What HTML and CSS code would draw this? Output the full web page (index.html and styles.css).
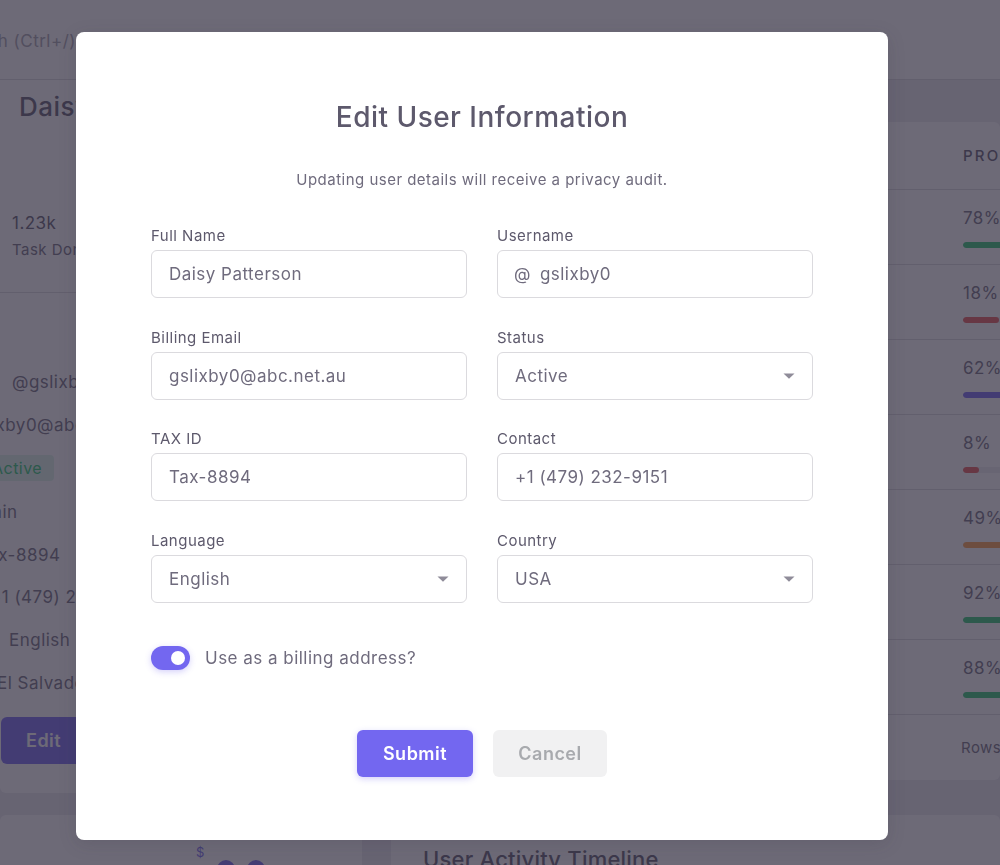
FILE: index.html
```html
<!DOCTYPE html>
<html lang="en">
<head>
<meta charset="utf-8">
<title>Edit User Information</title>
<link rel="stylesheet" href="styles.css">
</head>
<body>
<div class="page">
  <header class="navbar"><span class="search">Search (Ctrl+/)</span></header>
  <main class="content">
    <section class="card user-card">
      <h4 class="user-name">Daisy Patterson</h4>
      <div class="stat">
        <div class="stat-value">1.23k</div>
        <div class="stat-label">Task Done</div>
      </div>
      <hr class="divider">
      <ul class="details">
        <li class="d-user">@gslixby0</li>
        <li class="d-email">gslixby0@abc.net.au</li>
        <li class="d-status"><span class="badge">Active</span></li>
        <li class="d-role">Admin</li>
        <li class="d-tax">Tax-8894</li>
        <li class="d-contact">+1 (479) 232-9151</li>
        <li class="d-lang">English</li>
        <li class="d-country">El Salvador</li>
      </ul>
      <button class="btn-edit" type="button">Edit</button>
    </section>

    <section class="card table-card">
      <div class="t-head"><span class="t-cell">Progress</span></div>
      <div class="t-row"><div class="t-cell"><span class="pct">78%</span><div class="track"><div class="bar bar-green" style="width:78%"></div></div></div></div>
      <div class="t-row"><div class="t-cell"><span class="pct">18%</span><div class="track"><div class="bar bar-red" style="width:18%"></div></div></div></div>
      <div class="t-row"><div class="t-cell"><span class="pct">62%</span><div class="track"><div class="bar bar-purple" style="width:62%"></div></div></div></div>
      <div class="t-row"><div class="t-cell"><span class="pct">8%</span><div class="track"><div class="bar bar-red" style="width:8%"></div></div></div></div>
      <div class="t-row"><div class="t-cell"><span class="pct">49%</span><div class="track"><div class="bar bar-orange" style="width:49%"></div></div></div></div>
      <div class="t-row"><div class="t-cell"><span class="pct">92%</span><div class="track"><div class="bar bar-green" style="width:92%"></div></div></div></div>
      <div class="t-row"><div class="t-cell"><span class="pct">88%</span><div class="track"><div class="bar bar-green" style="width:88%"></div></div></div></div>
      <div class="t-foot"><span class="t-cell">Rows per page: 7</span></div>
    </section>

    <section class="card plan-card">
      <div class="plan-price"><sup class="cur">$</sup><span class="dot"></span><span class="dot"></span></div>
    </section>
    <section class="card timeline-card">
      <h5 class="timeline-title">User Activity Timeline</h5>
    </section>
  </main>
</div>

<div class="overlay">
  <div class="modal">
    <h3 class="modal-title">Edit User Information</h3>
    <p class="modal-sub">Updating user details will receive a privacy audit.</p>
    <form class="form">
      <div class="field">
        <label class="label">Full Name</label>
        <div class="control">Daisy Patterson</div>
      </div>
      <div class="field">
        <label class="label">Username</label>
        <div class="control"><span class="prefix">@</span>gslixby0</div>
      </div>
      <div class="field">
        <label class="label">Billing Email</label>
        <div class="control">gslixby0@abc.net.au</div>
      </div>
      <div class="field">
        <label class="label">Status</label>
        <div class="control select">Active<svg class="caret" width="12" height="6" viewBox="0 0 12 6"><path d="M0.5 0.5h11L6 5.8z" fill="#8f8c99"/></svg></div>
      </div>
      <div class="field">
        <label class="label">TAX ID</label>
        <div class="control">Tax-8894</div>
      </div>
      <div class="field">
        <label class="label">Contact</label>
        <div class="control">+1 (479) 232-9151</div>
      </div>
      <div class="field">
        <label class="label">Language</label>
        <div class="control select">English<svg class="caret" width="12" height="6" viewBox="0 0 12 6"><path d="M0.5 0.5h11L6 5.8z" fill="#8f8c99"/></svg></div>
      </div>
      <div class="field">
        <label class="label">Country</label>
        <div class="control select">USA<svg class="caret" width="12" height="6" viewBox="0 0 12 6"><path d="M0.5 0.5h11L6 5.8z" fill="#8f8c99"/></svg></div>
      </div>
    </form>
    <div class="switch-row">
      <span class="switch"><span class="knob"></span></span>
      <span class="switch-label">Use as a billing address?</span>
    </div>
    <div class="actions">
      <button class="btn btn-primary" type="button">Submit</button>
      <button class="btn btn-secondary" type="button">Cancel</button>
    </div>
  </div>
</div>
</body>
</html>
```

FILE: styles.css
```css
* { box-sizing: border-box; }
html, body { margin: 0; padding: 0; }
body {
  width: 1000px;
  height: 865px;
  overflow: hidden;
  background: #ebeaef;
  font-family: "Inter", "Liberation Sans", sans-serif;
  letter-spacing: 0.03em;
  color: #5d596c;
}

.page { width: 1000px; }

.navbar {
  height: 80px;
  background: #fff;
  border-bottom: 1px solid #dbdade;
  display: flex;
  align-items: center;
  padding-top: 2px;
}
.search {
  font-size: 17px;
  color: #a5a3ae;
  margin-left: -51px;
  white-space: nowrap;
}

.content {
  display: grid;
  grid-template-columns: 362px 1fr;
  column-gap: 29px;
  row-gap: 22px;
  align-items: start;
}

.card { background: #fff; border-radius: 0 0 6px 6px; }

/* left user card */
.user-card {
  height: 713px;
  padding-top: 9px;
  overflow: hidden;
}
.user-name {
  margin: 0 0 0 19px;
  font-size: 26px;
  line-height: 36px;
  font-weight: 500;
  color: #5d596c;
  white-space: nowrap;
}
.stat { margin: 86px 0 0 12px; }
.stat-value { font-size: 17px; line-height: 24px; color: #5d596c; }
.stat-label { font-size: 15px; line-height: 22px; margin-top: 4px; color: #6f6b7d; white-space: nowrap; }
.divider { border: 0; border-top: 1px solid #dbdade; margin: 31px 0 0; }
.details {
  list-style: none;
  margin: 77px 0 0;
  padding: 0;
  display: flex;
  flex-direction: column;
  gap: 18.7px;
  font-size: 17px;
  line-height: 24px;
  color: #6f6b7d;
  white-space: nowrap;
}
.d-user { margin-left: 12px; }
.d-email { margin-left: -34px; }
.d-status { margin-left: -20px; }
.d-role { margin-left: -36px; }
.d-tax { margin-left: -22px; }
.d-contact { margin-left: -10px; }
.d-lang { margin-left: 9px; }
.d-country { margin-left: -3px; }
.badge {
  display: inline-block;
  padding: 1px 12px;
  border-radius: 4px;
  background: rgba(40, 199, 111, 0.16);
  color: #28c76f;
  font-size: 16px;
}
.btn-edit {
  margin: 22px 0 0 1px;
  width: 100px;
  height: 47px;
  border: 0;
  border-radius: 6px;
  background: #7367f0;
  color: #fff;
  font-family: inherit;
  letter-spacing: inherit;
  font-size: 18px;
  font-weight: 600;
  padding: 0;
  text-align: left;
  text-indent: 25px;
}

/* right table card */
.table-card {
  margin-top: 42px;
  height: 658px;
  border-radius: 6px;
  overflow: hidden;
}
.t-head, .t-row, .t-foot {
  display: flex;
  padding-left: 572px;
  border-bottom: 1px solid #dbdade;
  white-space: nowrap;
}
.t-head {
  height: 68px;
  align-items: center;
  font-size: 15px;
  letter-spacing: 2.2px;
  text-transform: uppercase;
  color: #5d596c;
  font-weight: 500;
}
.t-row { height: 75px; }
.t-row .t-cell { padding-top: 16px; }
.pct { display: block; font-size: 17px; line-height: 24px; color: #6f6b7d; }
.track {
  margin-top: 12px;
  width: 200px;
  height: 6px;
  border-radius: 3px;
  background: #efeef0;
  overflow: hidden;
}
.bar { height: 6px; border-radius: 3px; }
.bar-green { background: #28c76f; }
.bar-red { background: #ea5455; }
.bar-purple { background: #7367f0; }
.bar-orange { background: #ff9f43; }
.t-foot {
  border-bottom: 0;
  height: 65px;
  align-items: center;
  padding-left: 570px;
  font-size: 15px;
  color: #6f6b7d;
}

/* bottom cards */
.plan-card, .timeline-card { height: 200px; border-radius: 6px; }
.plan-price {
  display: flex;
  align-items: flex-start;
  padding: 29px 0 0 196px;
  gap: 2px;
}
.cur { color: #7367f0; font-size: 13px; line-height: 16px; margin-top: 0; vertical-align: top; }
.dot {
  width: 18px; height: 18px; border-radius: 50%;
  background: #7367f0; margin-top: 16px; margin-left: 10px;
}
.timeline-title {
  margin: 0;
  padding: 29px 0 0 32px;
  font-size: 22px;
  line-height: 30px;
  font-weight: 500;
  color: #5d596c;
  letter-spacing: 0.01em;
  white-space: nowrap;
}

/* overlay + modal */
.overlay {
  position: fixed;
  inset: 0;
  background: rgba(47, 43, 61, 0.7);
}
.modal {
  margin: 32px 0 0 76px;
  width: 812px;
  height: 808px;
  background: #fff;
  border-radius: 8px;
  padding: 65px 75px 63px;
  box-shadow: 0 4px 18px rgba(47, 43, 61, 0.16);
}
.modal-title {
  margin: 0;
  text-align: center;
  font-size: 28px;
  line-height: 40px;
  font-weight: 500;
  color: #5d596c;
}
.modal-sub {
  margin: 32px 0 0;
  text-align: center;
  font-size: 15px;
  line-height: 22px;
  color: #6f6b7d;
}
.form {
  margin-top: 34px;
  display: grid;
  grid-template-columns: 1fr 1fr;
  column-gap: 30px;
  row-gap: 28.67px;
}
.label {
  display: block;
  font-size: 15px;
  line-height: 20px;
  margin: 1px 0 4px;
  color: #5d596c;
}
.control {
  height: 48px;
  border: 1px solid #dbdade;
  border-radius: 6px;
  padding: 0 17px;
  display: flex;
  align-items: center;
  font-size: 17px;
  color: #6f6b7d;
}
.prefix { margin-right: 9px; margin-left: -1px; }
.select { justify-content: space-between; padding-right: 17px; }
.caret { display: block; }

.switch-row {
  margin-top: 43px;
  display: flex;
  align-items: center;
  gap: 15px;
}
.switch {
  width: 39px;
  height: 24px;
  border-radius: 12px;
  background: #7367f0;
  display: flex;
  align-items: center;
  justify-content: flex-end;
  padding-right: 5px;
  box-shadow: 0 2px 6px rgba(115, 103, 240, 0.3);
}
.knob { width: 14px; height: 14px; border-radius: 50%; background: #fff; }
.switch-label { font-size: 17px; color: #6f6b7d; }

.actions {
  margin-top: 60px;
  display: flex;
  justify-content: center;
  gap: 20px;
}
.btn {
  height: 47px;
  border: 0;
  border-radius: 6px;
  font-family: inherit;
  letter-spacing: inherit;
  font-size: 18px;
  font-weight: 600;
}
.btn-primary {
  width: 116px;
  background: #7367f0;
  color: #fff;
  box-shadow: 0 2px 6px rgba(115, 103, 240, 0.3);
}
.btn-secondary {
  width: 114px;
  background: #f1f1f2;
  color: #a8aaae;
}
```
